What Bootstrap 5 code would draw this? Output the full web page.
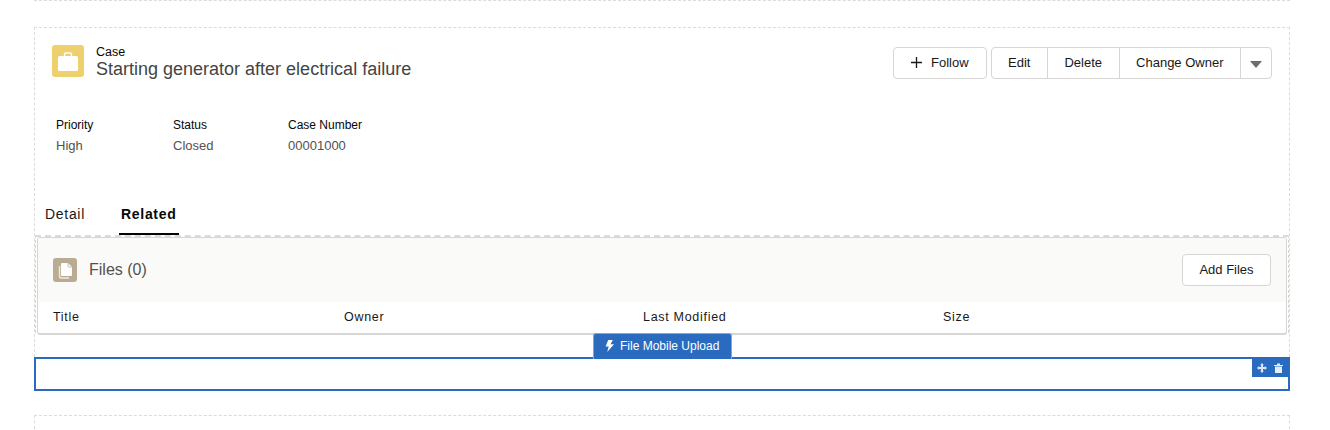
<!DOCTYPE html>
<html lang="en">
<head>
    <meta charset="UTF-8">
    <meta name="viewport" content="width=device-width, initial-scale=1.0">
    <title>Case Record Page</title>
    <link href="https://cdn.jsdelivr.net/npm/bootstrap@5.3.0/dist/css/bootstrap.min.css" rel="stylesheet">
    <style>
        body {
            font-family: "Liberation Sans", Arial, sans-serif;
            font-size: 12px;
            color: #3e3e3c;
            background: #fff;
        }
        .canvas {
            width: 1256px;
            margin-left: 34px;
        }
        .slot-top {
            height: 1px;
            border-bottom: 1px dashed #dddbda;
            margin-bottom: 26px;
        }
        .slot-main {
            height: 330px;
            border: 1px dashed #dddbda;
            border-bottom: 0;
            padding-top: 17px;
        }
        .slot-next {
            height: 14px;
            margin-top: 24px;
            border: 1px dashed #dddbda;
            border-bottom: 0;
        }
        .record-head {
            padding: 0 17px;
            height: 32px;
        }
        .case-icon {
            width: 32px;
            height: 32px;
            border-radius: 3px;
            background: #eed06f;
            flex: none;
        }
        .case-text {
            padding-top: 1px;
        }
        .case-type {
            color: #080707;
            font-size: 12.5px;
            line-height: 14px;
            padding-top: 1px;
        }
        .case-title {
            font-size: 18px;
            line-height: 22px;
            margin-top: -1px;
            color: #444;
        }
        .head-actions {
            align-self: flex-start;
            margin-top: 2px;
        }
        .sf-btn {
            --bs-btn-font-size: 13px;
            --bs-btn-color: #181818;
            --bs-btn-bg: #fff;
            --bs-btn-border-color: #d8d6d4;
            --bs-btn-hover-bg: #f3f2f2;
            --bs-btn-hover-border-color: #d8d6d4;
            --bs-btn-border-radius: 4px;
            --bs-btn-padding-x: 16.5px;
            height: 32px;
            padding-top: 0;
            padding-bottom: 2px;
            line-height: 27px;
            white-space: nowrap;
        }
        .follow-btn {
            width: 94px;
        }
        .caret-btn {
            --bs-btn-padding-x: 0;
            width: 32px;
        }
        .add-files-btn {
            --bs-btn-padding-x: 0;
            width: 89px;
        }
        .caret-down {
            width: 0;
            height: 0;
            border-left: 6.5px solid transparent;
            border-right: 6.5px solid transparent;
            border-top: 7px solid #706e6b;
            display: block;
            margin-top: 4px;
        }
        .fact-list {
            padding-left: 21px;
            margin-top: 41px;
            height: 58px;
        }
        .fact-list > div:nth-child(1) { width: 117px; }
        .fact-list > div:nth-child(2) { width: 115px; }
        .fact-label {
            color: #080707;
            line-height: 14px;
        }
        .fact-value {
            color: #54514f;
            font-size: 13px;
            line-height: 14px;
            margin-top: 7px;
        }
        .tab-row {
            margin-top: 18px;
            padding-left: 10px;
            height: 41px;
            gap: 34px;
        }
        .tab-item {
            font-size: 14px;
            letter-spacing: .7px;
            color: #181818;
            padding-top: 10px;
        }
        .tab-item.is-on {
            font-weight: 700;
            color: #080707;
            width: 60px;
            padding-left: 2px;
            border-bottom: 2px solid #080707;
            height: 41px;
        }
        .related-zone {
            border-top: 2px dashed #dddbda;
            border-left: 1px dashed #d8d6d4;
            border-right: 1px dashed #d8d6d4;
            padding: 0 1px;
            height: 98px;
        }
        .files-card {
            --bs-card-border-color: #d8d6d4;
            --bs-card-border-radius: 3px;
            --bs-card-inner-border-radius: 2px;
            height: 98px;
            border-bottom-width: 2px;
        }
        .files-head {
            background: #fafaf8;
            height: 64px;
            padding: 0 15px;
        }
        .files-icon {
            width: 24px;
            height: 24px;
            border-radius: 3px;
            background: #baac93;
            flex: none;
        }
        .files-title {
            font-size: 16px;
            color: #54514f;
        }
        .files-cols {
            height: 30px;
            padding-left: 15px;
            color: #181818;
            font-size: 12.5px;
            letter-spacing: .7px;
        }
        .files-cols > div { width: 300px; }
        .files-cols > div:nth-child(1) { width: 291px; }
        .files-cols > div:nth-child(2) { width: 299px; }
        .selected-box {
            height: 34px;
            border: 2px solid #2a6bbf;
        }
        .comp-tab {
            position: absolute;
            left: 557px;
            top: -26px;
            width: 139px;
            height: 26px;
            padding: 0 0 2px 11px;
            background: #2a6bbf;
            color: #fff;
            border-radius: 3px 3px 0 0;
            font-size: 12px;
            gap: 6px;
            border: 1px solid #7ea7db;
            border-bottom: 0;
        }
        .comp-tools {
            position: absolute;
            right: 0;
            top: 0;
            width: 36px;
            height: 18px;
            background: #2a6bbf;
            gap: 7px;
        }
    </style>
</head>
<body>
    <div class="canvas">
        <div class="slot-top"></div>

        <div class="slot-main">
            <div class="record-head d-flex align-items-center justify-content-between">
                <div class="d-flex align-items-center gap-2">
                    <div class="case-icon d-flex align-items-center justify-content-center">
                        <svg width="22" height="20" viewBox="0 0 22 20">
                            <path d="M7.5 5V3.200C7.500 2.500 8 2 8.700 2h4.600c.7 0 1.200.5 1.200 1.200V5" fill="none" stroke="#fff" stroke-width="1.400"/>
                            <rect x="1" y="5" width="20" height="15" rx="1.500" fill="#fff"/>
                        </svg>
                    </div>
                    <div class="case-text ms-1">
                        <div class="case-type">Case</div>
                        <div class="case-title">Starting generator after electrical failure</div>
                    </div>
                </div>
                <div class="head-actions d-flex gap-1">
                    <button type="button" class="btn sf-btn follow-btn d-flex align-items-center gap-2">
                        <svg width="13" height="13" viewBox="0 0 13 13"><path d="M6.500 1v11M1 6.500h11" stroke="#181818" stroke-width="1.300"/></svg>
                        Follow
                    </button>
                    <div class="btn-group">
                        <button type="button" class="btn sf-btn">Edit</button>
                        <button type="button" class="btn sf-btn">Delete</button>
                        <button type="button" class="btn sf-btn">Change Owner</button>
                        <button type="button" class="btn sf-btn caret-btn d-flex align-items-center justify-content-center"><span class="caret-down"></span></button>
                    </div>
                </div>
            </div>

            <div class="fact-list d-flex">
                <div>
                    <div class="fact-label">Priority</div>
                    <div class="fact-value">High</div>
                </div>
                <div>
                    <div class="fact-label">Status</div>
                    <div class="fact-value">Closed</div>
                </div>
                <div>
                    <div class="fact-label">Case Number</div>
                    <div class="fact-value">00001000</div>
                </div>
            </div>

            <div class="tab-row d-flex">
                <div class="tab-item">Detail</div>
                <div class="tab-item is-on">Related</div>
            </div>

            <div class="related-zone">
                <div class="card files-card">
                    <div class="files-head d-flex align-items-center justify-content-between">
                        <div class="d-flex align-items-center gap-2">
                            <div class="files-icon d-flex align-items-center justify-content-center">
                                <svg width="16" height="17" viewBox="0 0 16 17">
                                    <path d="M5 1h6l4 4v8a1 1 0 0 1-1 1H5a1 1 0 0 1-1-1V2a1 1 0 0 1 1-1z" fill="#fff"/>
                                    <path d="M11 1v3a1 1 0 0 0 1 1h3" fill="none" stroke="#baac93" stroke-width=".8"/>
                                    <path d="M2.500 4v10.500A1.500 1.500 0 0 0 4 16h8" fill="none" stroke="#fff" stroke-width="1.400" opacity=".75"/>
                                </svg>
                            </div>
                            <div class="files-title ms-1">Files (0)</div>
                        </div>
                        <button type="button" class="btn sf-btn add-files-btn">Add Files</button>
                    </div>
                    <div class="files-cols d-flex align-items-center">
                        <div>Title</div>
                        <div>Owner</div>
                        <div>Last Modified</div>
                        <div>Size</div>
                    </div>
                </div>
            </div>
        </div>

        <div class="selected-box position-relative">
            <div class="comp-tab d-flex align-items-center">
                <svg width="9" height="12" viewBox="0 0 9 12"><path d="M3.200 0h4.600L5.600 4.200H9L2.200 12l1.500-5.600H.6z" fill="#fff"/></svg>
                <span>File Mobile Upload</span>
            </div>
            <div class="comp-tools d-flex align-items-center justify-content-center">
                <svg width="10" height="10" viewBox="0 0 10 10"><path d="M5 0l2 2.200H6v1.800h1.800V3L10 5 7.800 7V6H6v1.800h1L5 10 3 7.800h1V6H2.200v1L0 5l2.200-2v1H4V2.200H3z" fill="#d7e5f7"/></svg>
                <svg width="9" height="10" viewBox="0 0 9 10"><path d="M0 2h9v1H0zM3 .5h3V2H3zM1 3.600h7V10H1z" fill="#e4eefa"/></svg>
            </div>
        </div>

        <div class="slot-next"></div>
    </div>

    <script src="https://cdn.jsdelivr.net/npm/bootstrap@5.3.0/dist/js/bootstrap.bundle.min.js"></script>
</body>
</html>
